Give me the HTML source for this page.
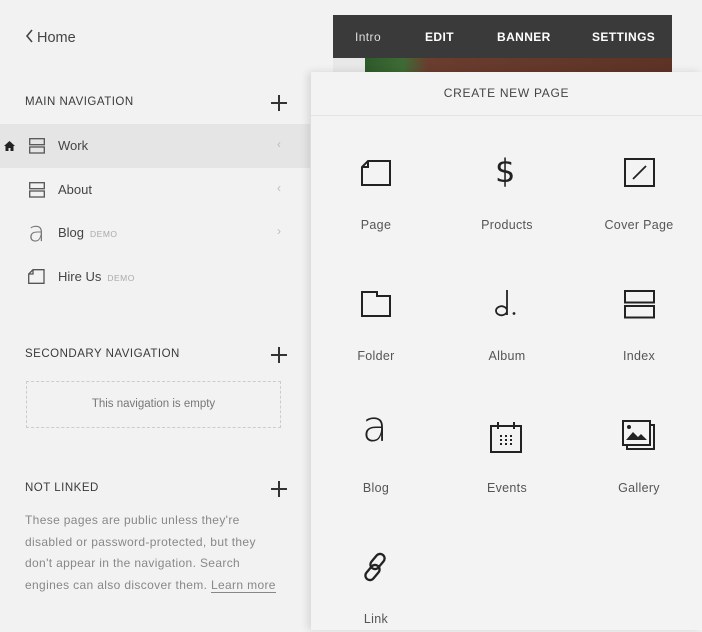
<!DOCTYPE html>
<html><head><meta charset="utf-8"><style>
*{margin:0;padding:0;box-sizing:border-box}
body{width:702px;height:632px;overflow:hidden;background:#f2f2f2;font-family:"Liberation Sans",sans-serif;position:relative;color:#333}
.a{position:absolute}
.hd{font-size:11.5px;letter-spacing:.5px;color:#3a3a3a}
.plus{position:absolute;left:271px;width:16px;height:16px}
.plus:before,.plus:after{content:"";position:absolute;background:#333}
.plus:before{left:7px;top:0;width:2px;height:16px}
.plus:after{top:7px;left:0;height:2px;width:16px}
.row{position:absolute;left:0;width:310px;height:44px;font-size:13px;color:#444}
.row .t{position:absolute;left:58px;top:14px}
.row .d{font-size:8.5px;color:#aaa;letter-spacing:.5px;margin-left:6px}
.row .c{position:absolute;left:277px;top:13px;color:#bbb;font-size:12px}
.lbl{position:absolute;width:130px;text-align:center;font-size:12.5px;color:#555;letter-spacing:.3px}
.ic{position:absolute}
</style></head><body>
<div class="a" style="left:25px;top:29px;font-size:14.5px;color:#444"><svg width="9" height="14" style="vertical-align:-1px;margin-right:3px"><path d="M7 1L2 7l5 6" fill="none" stroke="#444" stroke-width="1.6"/></svg>Home</div>
<div class="a hd" style="left:25px;top:96px">MAIN NAVIGATION</div><div class="plus" style="top:95px"></div>
<div class="row" style="top:124px;background:#e5e5e5"><svg class="a" style="left:4px;top:17px" width="11" height="10"><path d="M5.5 0L0 5h1.5v5h3V7h2v3h3V5H11z" fill="#222"/></svg><svg class="a" style="left:29px;top:14px" width="16" height="16"><rect x=".7" y=".7" width="14.6" height="6" fill="none" stroke="#555" stroke-width="1.3"/><rect x=".7" y="9" width="14.6" height="6" fill="none" stroke="#555" stroke-width="1.3"/></svg><span class="t">Work</span><span class="c">‹</span></div>
<div class="row" style="top:168px"><svg class="a" style="left:29px;top:14px" width="16" height="16"><rect x=".7" y=".7" width="14.6" height="6" fill="none" stroke="#555" stroke-width="1.3"/><rect x=".7" y="9" width="14.6" height="6" fill="none" stroke="#555" stroke-width="1.3"/></svg><span class="t">About</span><span class="c">‹</span></div>
<div class="row" style="top:211px"><span class="a" style="left:28px;top:4px;font-size:28px;color:#777;font-family:'DejaVu Sans',sans-serif;font-weight:200">a</span><span class="t">Blog<span class="d">DEMO</span></span><span class="c">›</span></div>
<div class="row" style="top:255px"><svg class="a" style="left:28px;top:14px" width="17" height="15"><path d="M5 .7H16v13.6H.7V5z M.7 5H5V.7" fill="none" stroke="#555" stroke-width="1.3"/></svg><span class="t">Hire Us<span class="d">DEMO</span></span></div>
<div class="a hd" style="left:25px;top:348px">SECONDARY NAVIGATION</div><div class="plus" style="top:347px"></div>
<div class="a" style="left:26px;top:381px;width:255px;height:47px;border:1.5px dashed #ccc;text-align:center;line-height:44px;font-size:11.5px;color:#777">This navigation is empty</div>
<div class="a hd" style="left:25px;top:482px">NOT LINKED</div><div class="plus" style="top:481px"></div>
<div class="a" style="left:25px;top:510px;width:290px;font-size:12px;letter-spacing:.35px;line-height:21.5px;color:#888;white-space:nowrap">These pages are public unless they're<br>disabled or password-protected, but they<br>don't appear in the navigation. Search<br>engines can also discover them. <span style="border-bottom:1px solid #888">Learn more</span></div>

<div class="a" style="left:333px;top:15px;width:339px;height:58px;background:linear-gradient(90deg,#e8e8e8 0,#e8e8e8 32px,#2d5a2a 32px,#3e6b35 70px,#6a3d2e 95px,#5d3326 100%)"></div>
<div class="a" style="left:333px;top:15px;width:339px;height:43px;background:#3a3a3a;color:#fff;font-size:12px;font-weight:bold;letter-spacing:.4px">
<span class="a" style="left:22px;top:15px;font-weight:normal;color:#ddd">Intro</span><span class="a" style="left:92px;top:15px">EDIT</span><span class="a" style="left:164px;top:15px">BANNER</span><span class="a" style="left:259px;top:15px">SETTINGS</span></div>
<div class="a" style="left:311px;top:72px;width:391px;height:558px;background:#f3f3f3;box-shadow:-3px 0 8px rgba(0,0,0,.12)">
<div style="height:44px;border-bottom:1px solid #e3e3e3;text-align:center;line-height:43px;font-size:12px;letter-spacing:.7px;color:#444">CREATE NEW PAGE</div>
</div>
<svg class="ic" style="left:361px;top:160px" width="30" height="26"><path d="M7 1H29v24H1V7z M1 7H7V1" fill="none" stroke="#222" stroke-width="2"/></svg>
<span class="a" style="left:495px;top:152px;font-size:32px;color:#222;font-family:'DejaVu Sans'">$</span>
<svg class="ic" style="left:624px;top:158px" width="31" height="29"><rect x="1" y="1" width="29" height="27" fill="none" stroke="#222" stroke-width="2"/><path d="M9 21L22 8" stroke="#222" stroke-width="1.8"/></svg>
<svg class="ic" style="left:361px;top:291px" width="30" height="26"><path d="M1 1H16V5H29v20H1z" fill="none" stroke="#222" stroke-width="2"/></svg>
<svg class="ic" style="left:494px;top:289px" width="26" height="30"><path d="M13 1V26 M13 22a5.5 4.5 0 1 1 0-.5" fill="none" stroke="#222" stroke-width="1.8"/><circle cx="20" cy="24.5" r="1.4" fill="#222"/></svg>
<svg class="ic" style="left:624px;top:290px" width="31" height="29"><rect x="1" y="1" width="29" height="11.5" fill="none" stroke="#222" stroke-width="2"/><rect x="1" y="16" width="29" height="11.5" fill="none" stroke="#222" stroke-width="2"/></svg>
<span class="a" style="left:362px;top:402px;font-size:42px;color:#222;font-family:'DejaVu Sans';font-weight:200">a</span>
<svg class="ic" style="left:490px;top:421px" width="32" height="32"><rect x="1" y="5" width="30" height="26" fill="none" stroke="#222" stroke-width="2"/><path d="M8 1v7M24 1v7" stroke="#222" stroke-width="2"/><g fill="#222"><rect x="10" y="14" width="2" height="2"/><rect x="15" y="14" width="2" height="2"/><rect x="20" y="14" width="2" height="2"/><rect x="10" y="18" width="2" height="2"/><rect x="15" y="18" width="2" height="2"/><rect x="20" y="18" width="2" height="2"/><rect x="10" y="22" width="2" height="2"/><rect x="15" y="22" width="2" height="2"/><rect x="20" y="22" width="2" height="2"/></g></svg>
<svg class="ic" style="left:622px;top:420px" width="34" height="31"><rect x="1" y="1" width="27" height="24" fill="none" stroke="#222" stroke-width="2"/><path d="M28 5h4v24H5v-4" fill="none" stroke="#222" stroke-width="2"/><circle cx="7" cy="7" r="2" fill="#222"/><path d="M4 20l7-8 5 5 3-3 6 6z" fill="#222"/></svg>
<svg class="ic" style="left:361px;top:551px" width="30" height="32"><g fill="none" stroke="#222" stroke-width="2.3"><rect x="12" y="2" width="9" height="17" rx="4.5" transform="rotate(40 16.5 10.5)"/><rect x="7" y="13" width="9" height="17" rx="4.5" transform="rotate(40 11.5 21.5)"/></g></svg>
<div class="lbl" style="left:311px;top:218px">Page</div>
<div class="lbl" style="left:442px;top:218px">Products</div>
<div class="lbl" style="left:574px;top:218px">Cover Page</div>
<div class="lbl" style="left:311px;top:349px">Folder</div>
<div class="lbl" style="left:442px;top:349px">Album</div>
<div class="lbl" style="left:574px;top:349px">Index</div>
<div class="lbl" style="left:311px;top:481px">Blog</div>
<div class="lbl" style="left:442px;top:481px">Events</div>
<div class="lbl" style="left:574px;top:481px">Gallery</div>
<div class="lbl" style="left:311px;top:612px">Link</div>
</body></html>
